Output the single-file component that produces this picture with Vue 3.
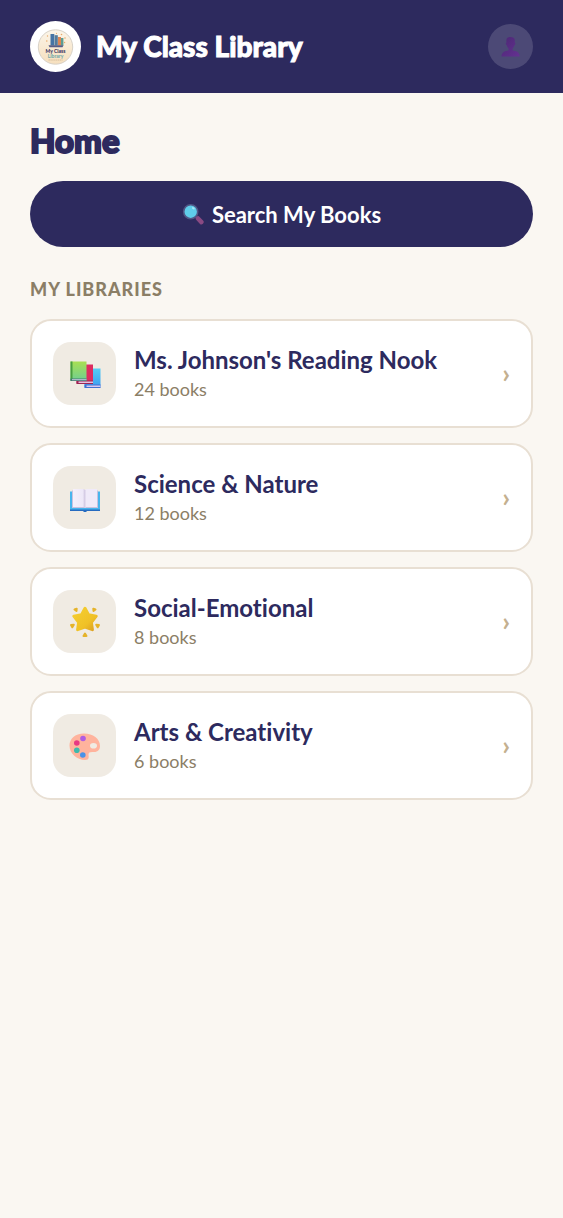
<template>
  <div class="app">
    <header class="header">
      <svg class="logo" viewBox="0 0 51 51" aria-hidden="true">
        <defs>
          <linearGradient id="badge" x1="0" y1="0" x2="0" y2="1">
            <stop offset="0" stop-color="#fbf5ea" />
            <stop offset="1" stop-color="#f6dfbd" />
          </linearGradient>
        </defs>
        <circle cx="25.5" cy="25.5" r="25.5" fill="#fff" />
        <circle cx="25.5" cy="26" r="17.2" fill="url(#badge)" stroke="#d8d2c8" stroke-width="1" />
        <rect x="20.5" y="13" width="3.8" height="11.5" fill="#4574a5" />
        <rect x="24.6" y="14.2" width="3.2" height="10.3" fill="#547b9b" />
        <rect x="28" y="16" width="3" height="8.5" fill="#de8654" />
        <rect x="31" y="17" width="2.4" height="7.5" fill="#5b9e93" />
        <path d="M18.5 24.2h15l-1 2h-13z" fill="#565d86" />
        <g fill="#e8ab6c">
          <circle cx="17.5" cy="15" r=".7" />
          <circle cx="16.8" cy="20" r=".8" />
          <circle cx="26.5" cy="12.3" r=".6" />
          <circle cx="31.5" cy="13.5" r=".8" />
          <circle cx="35" cy="17" r=".8" />
          <circle cx="34.6" cy="21.5" r=".7" />
        </g>
        <text x="25.5" y="32" text-anchor="middle" class="logo-name">My Class</text>
        <text x="25.5" y="36.6" text-anchor="middle" class="logo-sub">Library</text>
        <path d="M18.5 39h14" stroke="#c9ac8a" stroke-width=".7" stroke-dasharray="1.4 .5" />
      </svg>
      <span class="brand">My Class Library</span>
      <button class="avatar" type="button" aria-label="Profile">
        <svg viewBox="0 0 20 22" width="20" height="22">
          <defs>
            <linearGradient id="person" x1="0" y1="0" x2="1" y2="1">
              <stop offset="0" stop-color="#4b2873" />
              <stop offset="1" stop-color="#653092" />
            </linearGradient>
          </defs>
          <path d="M.5 20.500c0-4 3.200-5.700 7-6v-2.200C6.600 11.500 5.900 10.300 5.700 9c-1-.2-1.300-2.200-.3-2.200V4C5.400 2 7 1 9.500 1s4.300 1 4.300 3v2.800c1 0 .7 2-.3 2.200-.2 1.300-.9 2.500-1.800 3.300v2.200c3.800.3 7 2 7 6z" fill="url(#person)" />
        </svg>
      </button>
    </header>

    <main class="content">
      <h1 class="title">Home</h1>

      <button class="search-btn" type="button">
        <svg viewBox="0 0 22 22" width="22" height="22" aria-hidden="true">
          <path d="M13.500 13.500l2 2" stroke="#6b4c78" stroke-width="2" />
          <path d="M16 15.500l3.400 3.600" stroke="#8a4a83" stroke-width="4.500" stroke-linecap="round" />
          <circle cx="8.700" cy="8.700" r="7" fill="#5fcdea" stroke="#515786" stroke-width="1.600" />
          <ellipse cx="11.300" cy="5.300" rx="1.500" ry="1" fill="#a8e9f6" transform="rotate(35 11.300 5.300)" />
        </svg>
        <span>Search My Books</span>
      </button>

      <h2 class="section-label">My Libraries</h2>

      <div class="library-list">
        <button
          v-for="library in libraries"
          :key="library.id"
          class="library-card"
          type="button"
        >
          <span class="library-icon">
            <svg v-if="library.icon === 'books'" viewBox="0 0 32 32" width="32" height="32">
              <defs>
                <linearGradient id="green" x1="0" y1="0" x2="0" y2="1">
                  <stop offset="0" stop-color="#a8df52" />
                  <stop offset="1" stop-color="#70cf91" />
                </linearGradient>
                <linearGradient id="blue" x1="0" y1="0" x2="0" y2="1">
                  <stop offset="0" stop-color="#55cdf5" />
                  <stop offset="1" stop-color="#3b9df0" />
                </linearGradient>
              </defs>
              <path d="M15.500 10.500h16v19h-16z" fill="url(#blue)" />
              <path d="M15.500 26.500h16V30h-16z" fill="#416fd0" />
              <path d="M17.500 27.500h14V29h-14z" fill="#d7c8f2" />
              <path d="M7.500 6.500H24v19H7.500z" fill="#de2c60" />
              <path d="M7.500 22.500H24V26H7.500z" fill="#9b2554" />
              <path d="M9.500 23.500H24V25H9.500z" fill="#e3bfdc" />
              <path d="M1.500 3.500h16v19h-16z" fill="url(#green)" />
              <path d="M1.500 3.500h2v19h-2z" fill="#499e40" />
              <path d="M1.500 20.500h16V23h-16z" fill="#407d71" />
              <path d="M3 21.200h14.500v1H3z" fill="#c9c6e2" />
            </svg>

            <svg v-else-if="library.icon === 'open-book'" viewBox="0 0 32 32" width="32" height="32">
              <defs>
                <linearGradient id="page" x1="0" y1="0" x2="1" y2="0">
                  <stop offset="0" stop-color="#f5f0fb" />
                  <stop offset=".82" stop-color="#eee8f8" />
                  <stop offset="1" stop-color="#cfc5df" />
                </linearGradient>
              </defs>
              <path d="M1 9.500h30V28H18l-1 1.500h-2L14 28H1z" fill="#48b5ed" />
              <path d="M1 27.500h30V29H18l-1 1h-2l-1-1H1z" fill="#266bc0" />
              <path d="M3 8.500h26V26H3z" fill="#cac1df" />
              <path d="M4 7h10.500Q16 7 16 8.500V26l-1-1H4z" fill="url(#page)" />
              <path d="M28 7H17.500Q16 7 16 8.500V26l1-1h11z" fill="#f0eaf9" />
              <path d="M16 8v18" stroke="#d6cce6" />
            </svg>

            <svg v-else-if="library.icon === 'star'" viewBox="0 0 32 32" width="32" height="32">
              <defs>
                <linearGradient id="gold" x1="0" y1="0" x2="1" y2="1">
                  <stop offset="0" stop-color="#f5cf31" />
                  <stop offset=".65" stop-color="#f0c126" />
                  <stop offset="1" stop-color="#db9d21" />
                </linearGradient>
              </defs>
              <g fill="#e5b32a" stroke="#e5b32a" stroke-width="2" stroke-linejoin="round">
                <path d="M5.500 3.500l2.200-.8-.2 2.300z" />
                <path d="M26.500 3.500l-2.200-.8.2 2.300z" />
                <path d="M2 19l2.800-.2-1.500 2.500z" />
                <path d="M30 19l-2.800-.2 1.500 2.500z" />
                <path d="M16 27.500l1.500 2.500h-3z" />
              </g>
              <path
                d="M16 2.300l3.500 6.500 7.700 1.400-4.800 6.200 1 7.300-7.400-2.500-7.400 2.500 1-7.300-4.800-6.200 7.700-1.400z"
                fill="url(#gold)"
                stroke="url(#gold)"
                stroke-width="3"
                stroke-linejoin="round"
              />
            </svg>

            <svg v-else viewBox="0 0 32 32" width="32" height="32">
              <path
                fill-rule="evenodd"
                d="M15 3.500C6 3.500.500 9 .500 15.500c0 8 7.500 14.500 15.500 14.500 5 0 3.500-3.500 3.500-5.500 0-2.500 2.500-2.500 5.500-2.500 4 0 6-2.500 6-6C31 8.500 24 3.500 15 3.500zM24.500 13a3.500 2.800 0 1 1 0 5.600 3.500 2.800 0 0 1 0-5.600z"
                fill="#ffb39d"
              />
              <circle cx="14" cy="8.500" r="2.800" fill="#af5ce2" />
              <circle cx="7.800" cy="13" r="2.800" fill="#e83883" />
              <circle cx="7.800" cy="20.300" r="2.800" fill="#3fb9ac" />
              <circle cx="13.800" cy="25" r="2.800" fill="#4a92e8" />
            </svg>
          </span>

          <span class="library-info">
            <span class="library-name">{{ library.name }}</span>
            <span class="library-count">{{ library.count }} books</span>
          </span>
          <span class="chevron" aria-hidden="true">›</span>
        </button>
      </div>
    </main>
  </div>
</template>

<script setup>
import { ref } from 'vue'

const libraries = ref([
  { id: 1, name: "Ms. Johnson's Reading Nook", count: 24, icon: 'books' },
  { id: 2, name: 'Science & Nature', count: 12, icon: 'open-book' },
  { id: 3, name: 'Social-Emotional', count: 8, icon: 'star' },
  { id: 4, name: 'Arts & Creativity', count: 6, icon: 'palette' }
])
</script>

<style>
body {
  background: #faf7f2;
}
</style>

<style scoped>
.app {
  min-height: 100vh;
  background: #faf7f2;
  color: #2d2a5e;
  font-family: Lato, 'Open Sans', sans-serif;
  font-variant-ligatures: none;
}

button {
  font-family: inherit;
  font-variant-ligatures: none;
  cursor: pointer;
}

.header {
  display: flex;
  align-items: center;
  gap: 15px;
  padding: 21px 30px;
  background: #2d2a5e;
}

.logo {
  width: 51px;
  height: 51px;
  flex-shrink: 0;
}

.logo-name {
  font-size: 5px;
  font-weight: 900;
  fill: #3e3964;
}

.logo-sub {
  font-size: 5px;
  font-weight: 900;
  fill: #77aaa9;
}

.brand {
  flex: 1;
  padding-bottom: 2px;
  color: #fff;
  font-size: 28px;
  font-weight: 900;
  line-height: 36px;
  -webkit-text-stroke: 1px #fff;
}

.avatar {
  display: flex;
  align-items: center;
  justify-content: center;
  width: 45px;
  height: 45px;
  padding: 0;
  border: none;
  border-radius: 50%;
  background: rgba(255, 255, 255, 0.15);
}

.content {
  padding: 26px 30px;
}

.title {
  margin: 0 0 20px;
  font-size: 33px;
  font-weight: 900;
  line-height: 42px;
  -webkit-text-stroke: 2px #2d2a5e;
}

.search-btn {
  display: flex;
  align-items: center;
  justify-content: center;
  gap: 8px;
  width: 100%;
  height: 66px;
  border: none;
  border-radius: 33px;
  background: #2d2a5e;
  color: #fff;
  font-size: 22px;
  font-weight: 700;
}

.section-label {
  margin: 30px 0 18px;
  color: #8b7e66;
  font-size: 18px;
  font-weight: 900;
  line-height: 24px;
  letter-spacing: 1px;
  text-transform: uppercase;
}

.library-list {
  display: flex;
  flex-direction: column;
  gap: 15px;
}

.library-card {
  display: flex;
  align-items: center;
  gap: 18px;
  width: 100%;
  padding: 21px;
  border: 2px solid #e8dfd3;
  border-radius: 21px;
  background: #fff;
  color: inherit;
  text-align: left;
}

.library-icon {
  display: flex;
  align-items: center;
  justify-content: center;
  width: 63px;
  height: 63px;
  flex-shrink: 0;
  border-radius: 18px;
  background: #f0ebe3;
}

.library-info {
  display: flex;
  flex: 1;
  flex-direction: column;
  min-width: 0;
}

.library-name {
  font-size: 24px;
  font-weight: 700;
  line-height: 30px;
}

.library-count {
  color: #8b7e66;
  font-size: 18px;
  line-height: 28px;
}

.chevron {
  margin-bottom: 2px;
  color: #c4b08f;
  font-size: 27px;
  font-weight: 700;
  line-height: 30px;
}
</style>
